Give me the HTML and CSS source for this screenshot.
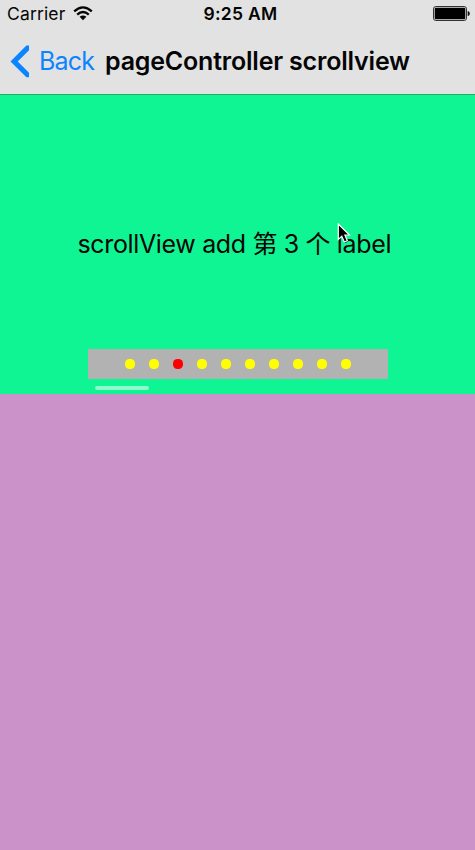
FILE: index.html
```html
<!DOCTYPE html>
<html lang="en">
<head>
<meta charset="utf-8">
<title>pageController scrollview</title>
<link rel="stylesheet" href="styles.css">
</head>
<body>
<header class="header">
  <div class="status">
    <div class="status-side">
      <span class="carrier">Carrier</span>
      <svg class="wifi" width="20" height="15" viewBox="0 0 20 15"><g fill="none" stroke="#050505" stroke-width="2.3"><path d="M1.2 5.3Q10-2.6 18.8 5.3"/><path d="M4.2 8.6Q10 3.4 15.8 8.6"/></g><path d="M6.6 10.8Q10 8 13.4 10.8L10 14.3Z" fill="#050505"/></svg>
    </div>
    <span class="time">9:25 AM</span>
    <div class="status-side status-end">
      <svg class="battery" width="37" height="15" viewBox="0 0 37 15"><rect x=".5" y=".5" width="33" height="14" rx="2.3" fill="#e2e2e2" stroke="#333"/><rect x="1.7" y="1.7" width="30.6" height="11.6" rx="1" fill="#000"/><path d="M34.7 5Q36.8 5 36.8 7.5T34.7 10Z" fill="#111"/></svg>
    </div>
  </div>
  <nav class="nav">
    <svg class="chevron" width="20" height="33" viewBox="0 0 20 33"><path d="M.5 16.5L16.4.6H19V5.2L7.7 16.5L19 27.7V32.2H16.4Z" fill="#0a84ff"/></svg>
    <span class="back">Back</span>
    <h1 class="title">pageController scrollview</h1>
  </nav>
</header>
<main class="scroll">
  <p class="label">scrollView add 第 3 个 label</p>
  <div class="pager"><i></i><i></i><i class="current"></i><i></i><i></i><i></i><i></i><i></i><i></i><i></i></div>
  <div class="indicator"></div>
  <svg class="cursor" width="14" height="21" viewBox="0 0 14 21"><path d="M1.3 1V16.5L4.8 13.3L7.3 19L10.3 17.7L7.9 12H12.5Z" fill="#000" stroke="#fff" stroke-width="1.2"/></svg>
</main>
</body>
</html>
```

FILE: styles.css
```css
body {
  margin: 0;
  min-height: 850px;
  background: #cb91c9;
  color: #050505;
  font-family: Inter, "Noto Sans CJK SC", sans-serif;
  white-space: nowrap;
}
.header {
  box-sizing: border-box;
  height: 95px;
  background: #e2e2e2;
  border-bottom: 1px solid #20a969;
}
.status {
  display: flex;
  height: 27px;
  padding: 0 4px 0 7px;
  align-items: center;
  font-size: 17.5px;
}
.status-side {
  display: flex;
  flex: 1;
  align-items: center;
}
.status-end {
  justify-content: flex-end;
}
.battery {
  margin-right: 1px;
}
.carrier {
  width: 65.5px;
  letter-spacing: 0.15px;
}
.wifi {
  margin-top: -1px;
}
.time {
  margin-left: 3px;
  font-weight: 600;
  letter-spacing: 0.3px;
}
.nav {
  display: flex;
  height: 68px;
  padding-left: 10px;
  align-items: center;
}
.chevron {
  margin-right: 9px;
}
.back {
  width: 66px;
  color: #0a84ff;
  font-size: 25px;
  letter-spacing: -0.8px;
}
.title {
  margin: 0;
  font-size: 25px;
  font-weight: 600;
  letter-spacing: -0.2px;
}
.scroll {
  position: relative;
  display: flow-root;
  height: 299px;
  background: #10f593;
}
.label {
  margin: 129px 0 0 77.5px;
  height: 40px;
  line-height: 40px;
  font-size: 25px;
  letter-spacing: -0.35px;
}
.pager {
  display: flex;
  width: 300px;
  height: 30px;
  margin: 85px 0 0 88px;
  gap: 14px;
  align-items: center;
  justify-content: center;
  background: #b2b2b2;
}
.pager i {
  width: 10px;
  height: 10px;
  border-radius: 4.4px;
  background: #ff0;
}
.pager .current {
  background: #f00;
}
.indicator {
  width: 54px;
  height: 4px;
  margin: 7px 0 0 95px;
  border-radius: 2px;
  background: #8ef9cd;
}
.cursor {
  position: absolute;
  left: 337px;
  top: 128px;
}
```
